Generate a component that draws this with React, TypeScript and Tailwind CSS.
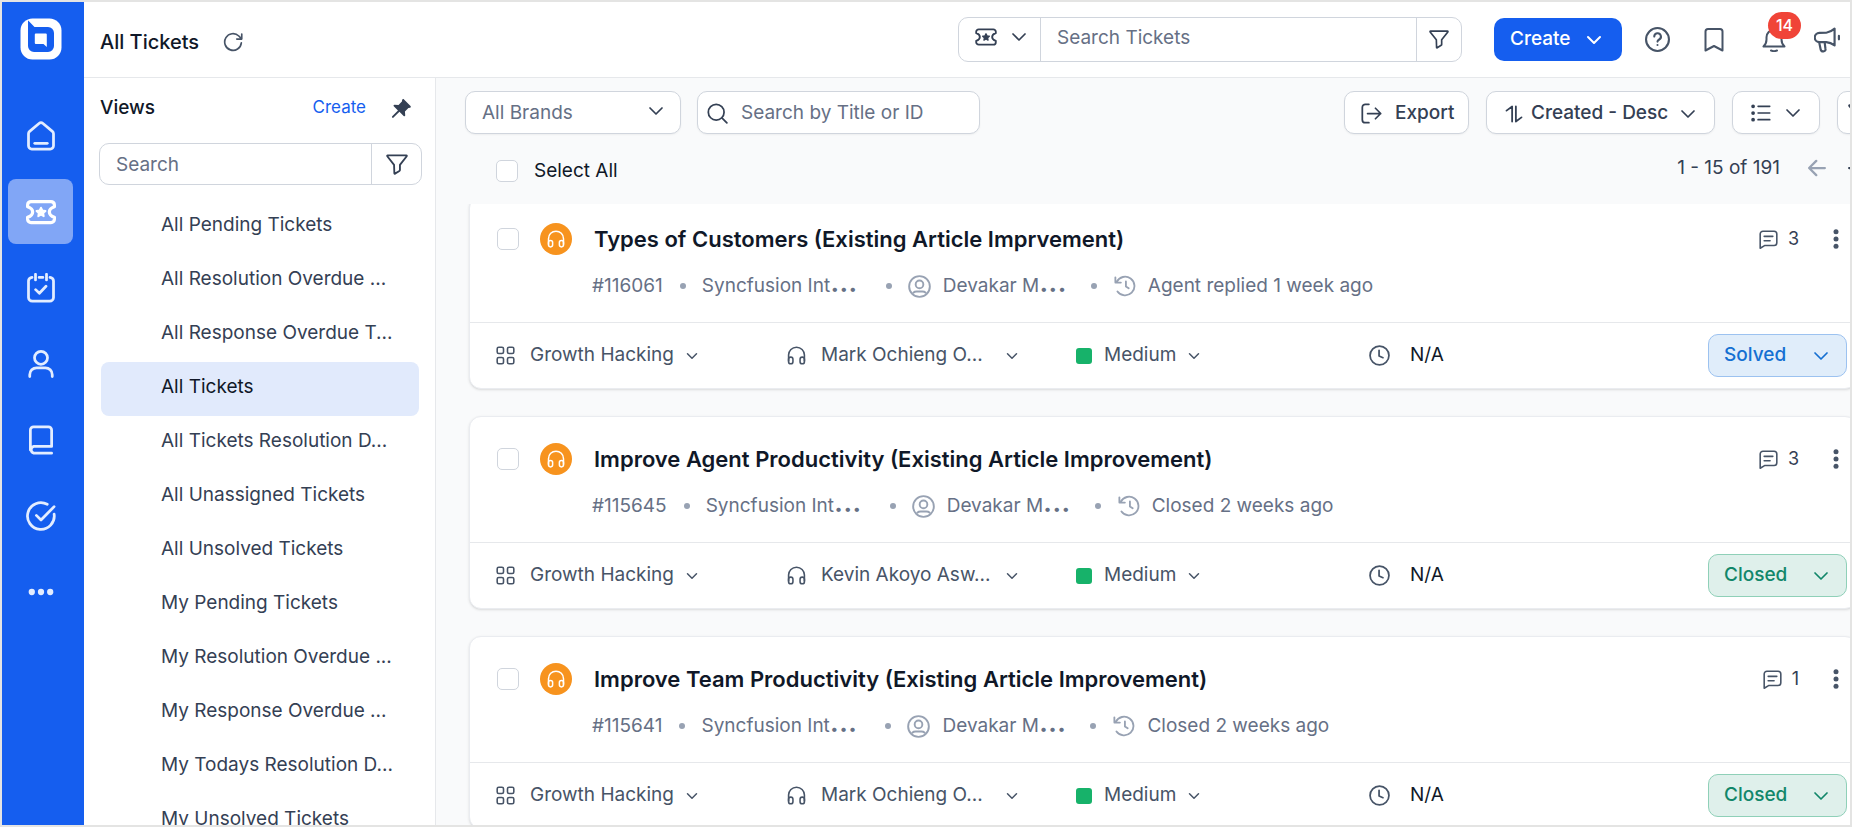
import type { ReactNode } from "react";
import { clsx } from "clsx";

interface IconProps {
  className?: string;
  strokeWidth?: number;
}

interface Ticket {
  id: string;
  title: string;
  agent: string;
  activity: string;
  comments: number;
  status: "Solved" | "Closed";
}

const VIEWS = [
  "All Pending Tickets",
  "All Resolution Overdue ...",
  "All Response Overdue T...",
  "All Tickets",
  "All Tickets Resolution D...",
  "All Unassigned Tickets",
  "All Unsolved Tickets",
  "My Pending Tickets",
  "My Resolution Overdue ...",
  "My Response Overdue ...",
  "My Todays Resolution D...",
  "My Unsolved Tickets",
];

const TICKETS: Ticket[] = [
  {
    id: "116061",
    title: "Types of Customers (Existing Article Imprvement)",
    agent: "Mark Ochieng O...",
    activity: "Agent replied 1 week ago",
    comments: 3,
    status: "Solved",
  },
  {
    id: "115645",
    title: "Improve Agent Productivity (Existing Article Improvement)",
    agent: "Kevin Akoyo Asw...",
    activity: "Closed 2 weeks ago",
    comments: 3,
    status: "Closed",
  },
  {
    id: "115641",
    title: "Improve Team Productivity (Existing Article Improvement)",
    agent: "Mark Ochieng O...",
    activity: "Closed 2 weeks ago",
    comments: 1,
    status: "Closed",
  },
];

/* ---------- Icons ---------- */

function Icon({ className, strokeWidth = 2, children }: IconProps & { children: ReactNode }) {
  return (
    <svg
      viewBox="0 0 24 24"
      fill="none"
      stroke="currentColor"
      strokeWidth={strokeWidth}
      strokeLinecap="round"
      strokeLinejoin="round"
      aria-hidden="true"
      className={clsx("shrink-0", className)}
    >
      {children}
    </svg>
  );
}

function Logo() {
  return (
    <svg viewBox="0 0 42 42" className="size-[42px]" aria-hidden="true">
      <rect x="0.5" y="0.5" width="41" height="41" rx="12" fill="#fff" />
      <path d="M8.200 2.500 14.500 9H28a6 6 0 0 1 6 6v13a6 6 0 0 1-6 6H14a6 6 0 0 1-6-6V3z" fill="#155eef" />
      <path d="M14.800 16.500a1 1 0 0 1 1-1h10a1 1 0 0 1 1 1V29L23.500 26h-7.700a1 1 0 0 1-1-1z" fill="#fff" />
    </svg>
  );
}

const HomeIcon = (p: IconProps) => (
  <Icon {...p}>
    <path d="M2 10.200c0-.8.300-1.400.9-1.900l7.500-6.300a2.500 2.500 0 0 1 3.200 0l7.500 6.300c.6.500.9 1.100.9 1.900v9.600a2.600 2.600 0 0 1-2.600 2.600H4.600A2.600 2.600 0 0 1 2 19.800z" />
    <path d="M7 17.800h10" />
  </Icon>
);

const TicketIcon = (p: IconProps) => (
  <Icon {...p}>
    <path d="M1.300 6.300a2.700 2.700 0 0 1 2.700-2.700h16a2.700 2.700 0 0 1 2.700 2.700v1.500c-2.500.8-4 2.200-4 4.200s1.500 3.400 4 4.200v1.500a2.700 2.700 0 0 1-2.700 2.700H4a2.700 2.700 0 0 1-2.700-2.700v-1.500c2.500-.8 4-2.200 4-4.200s-1.500-3.400-4-4.200z" />
    <path
      d="m12 8.500 1.100 2.300 2.500.4-1.800 1.700.4 2.500-2.200-1.200-2.200 1.200.4-2.500-1.800-1.700 2.500-.4z"
      fill="currentColor"
      strokeWidth="1.500"
    />
  </Icon>
);

const CalendarIcon = (p: IconProps) => (
  <Icon {...p}>
    <path d="M4.800 3.500a3 3 0 0 0-2.800 3v13a3 3 0 0 0 3 3h14a3 3 0 0 0 3-3v-13a3 3 0 0 0-2.800-3M10.500 3.500h3M7.600 1v4.500M16.400 1v4.500M7.700 13.300l3 2.900 5.300-5.600" />
  </Icon>
);

const UserIcon = (p: IconProps) => (
  <Icon {...p}>
    <circle cx="12" cy="7" r="5.200" />
    <path d="M3 22v-1.500a5.500 5.500 0 0 1 5.500-5.500h7a5.500 5.500 0 0 1 5.500 5.500V22" />
  </Icon>
);

const BookIcon = (p: IconProps) => (
  <Icon {...p}>
    <path d="M20.500 22.500H6.200a2.800 2.800 0 0 1 0-5.400h14.300V4a2.500 2.500 0 0 0-2.500-2.500H6A2.500 2.500 0 0 0 3.500 4v16" />
  </Icon>
);

const CheckCircleIcon = (p: IconProps) => (
  <Icon {...p}>
    <path d="M22.500 10.500a10.700 10.700 0 1 1-5.500-7.900" />
    <path d="m8.300 11.500 3.700 3.700L22.500 4.500" />
  </Icon>
);

const DotsIcon = ({ className }: IconProps) => (
  <svg viewBox="0 0 24 24" fill="currentColor" className={className} aria-hidden="true">
    <circle cx="3.500" cy="12" r="2.900" />
    <circle cx="12" cy="12" r="2.900" />
    <circle cx="20.500" cy="12" r="2.900" />
  </svg>
);

const KebabIcon = ({ className }: IconProps) => (
  <svg viewBox="0 0 6 20" fill="currentColor" className={className} aria-hidden="true">
    <circle cx="3" cy="2.800" r="2.500" />
    <circle cx="3" cy="10" r="2.500" />
    <circle cx="3" cy="17.200" r="2.500" />
  </svg>
);

const RefreshIcon = (p: IconProps) => (
  <Icon {...p}>
    <path d="M22 13a10 10 0 1 1-3-8.200L22 8M22.500 2.500V8.500h-6" />
  </Icon>
);

const PinIcon = ({ className }: IconProps) => (
  <svg viewBox="0 0 24 24" fill="currentColor" className={className} aria-hidden="true">
    <path d="M14.200 1.600 22.400 9.800c.6.600.3 1.600-.5 1.800l-1.800.3-3.800 3.800.3 4.300c0 .9-1 1.400-1.700.8l-4.600-4.600-6.400 6.200a1 1 0 0 1-1.500-1.400l6.300-6.400-4.600-4.500c-.6-.7-.1-1.700.8-1.700l4.400.2 3.700-3.700.3-1.800c.2-.8 1.200-1.100 1.800-.5z" />
  </svg>
);

const FunnelIcon = (p: IconProps) => (
  <Icon {...p}>
    <path d="M1.800 2.500h20.400c.5 0 .7.600.4 1L15.200 13v5.500c0 .5-.2.900-.6 1.100L9.800 22.500c-.3.200-.7 0-.7-.4L8.800 13 1.400 3.500c-.3-.4-.1-1 .4-1z" />
  </Icon>
);

const ChevronIcon = (p: IconProps) => (
  <Icon {...p}>
    <path d="m3 7.500 9 9 9-9" />
  </Icon>
);

const HelpIcon = (p: IconProps) => (
  <Icon {...p}>
    <circle cx="12" cy="12" r="11" />
    <path d="M8.900 9.200a3.200 3.200 0 1 1 4.700 2.800c-1 .6-1.600 1-1.600 2M12 17.200v.1" />
  </Icon>
);

const BookmarkIcon = (p: IconProps) => (
  <Icon {...p}>
    <path d="M3.500 3.500a2.500 2.500 0 0 1 2.500-2.500h12a2.500 2.500 0 0 1 2.500 2.500V22.500L12 18l-8.500 4.500z" />
  </Icon>
);

const BellIcon = (p: IconProps) => (
  <Icon {...p}>
    <path d="M1.500 18.500h21c-2-1.900-3-4.200-3-7V9.300a7.500 7.500 0 0 0-15 0v2.200c0 2.800-1 5.100-3 7zM9 22.500c1.900.8 4.100.8 6 0" />
  </Icon>
);

const MegaphoneIcon = (p: IconProps) => (
  <Icon {...p}>
    <path d="M11.300 5.300c3-.4 5.300-1.700 7.700-3.800v15.500c-2.400-1.800-4.700-2.800-7.700-3H5a4.300 4.300 0 0 1 0-8.600zM4.800 14.200l1.300 6.300c.2 1.200 1 2 2.300 2h.4c1.200 0 2-1 1.800-2.200L9.800 14M23 8.200v3.200" />
  </Icon>
);

const SearchIcon = (p: IconProps) => (
  <Icon {...p}>
    <circle cx="10.500" cy="10.500" r="9" />
    <path d="m17.300 17.300 5.400 5.400" />
  </Icon>
);

const ExportIcon = (p: IconProps) => (
  <Icon {...p}>
    <path d="M9 1.500H5A3.500 3.500 0 0 0 1.500 5v14A3.500 3.500 0 0 0 5 22.500h4M7.500 12h15M16.500 6l6 6-6 6" />
  </Icon>
);

const SortIcon = (p: IconProps) => (
  <Icon {...p}>
    <path d="M2 7.500 9.500 2v20M14.500 2v20l7.500-5.500" />
  </Icon>
);

const ListIcon = (p: IconProps) => (
  <Icon {...p}>
    <path d="M8.500 4h14M8.500 12h14M8.500 20h14" />
    <path d="M2.500 4v.01M2.500 12v.01M2.500 20v.01" strokeWidth="4.500" />
  </Icon>
);

const ArrowIcon = (p: IconProps) => (
  <Icon {...p}>
    <path d="M22.500 12H2M11 2.500 1.500 12l9.500 9.500" />
  </Icon>
);

const HeadsetIcon = (p: IconProps) => (
  <Icon {...p}>
    <path d="M2 19v-7.500a10 10 0 0 1 20 0V19" />
    <rect x="2" y="14" width="5.500" height="8.500" rx="2.700" />
    <rect x="16.500" y="14" width="5.500" height="8.500" rx="2.700" />
  </Icon>
);

const PersonCircleIcon = (p: IconProps) => (
  <Icon {...p}>
    <circle cx="12" cy="12" r="10.800" />
    <circle cx="12" cy="9.800" r="4" />
    <path d="M5.500 18.500c1-.9 2-1.200 3.500-1.200h6c1.500 0 2.500.3 3.500 1.200" />
  </Icon>
);

const HistoryIcon = (p: IconProps) => (
  <Icon {...p}>
    <path d="M3 7.500A10.200 10.200 0 1 1 3.800 18M1.500 2.500v5.800h6M13 7v5.500l3 2" />
  </Icon>
);

const GridIcon = (p: IconProps) => (
  <Icon {...p}>
    <rect x="1.500" y="1.500" width="8" height="8" rx="2" />
    <rect x="14.500" y="1.500" width="8" height="8" rx="2" />
    <rect x="1.500" y="14.500" width="8" height="8" rx="2" />
    <rect x="14.500" y="14.500" width="8" height="8" rx="2" />
  </Icon>
);

const ClockIcon = (p: IconProps) => (
  <Icon {...p}>
    <circle cx="12" cy="12" r="10.800" />
    <path d="M11.500 6v6.500l4.500 2" />
  </Icon>
);

const CommentIcon = (p: IconProps) => (
  <Icon {...p}>
    <path d="M1.500 23V5A3.500 3.500 0 0 1 5 1.500h14A3.500 3.500 0 0 1 22.500 5v11a3.500 3.500 0 0 1-3.500 3.500H7.500zM6.500 8h11M6.500 13.500h7.500" />
  </Icon>
);

/* ---------- Side rail ---------- */

const RAIL = [
  { label: "Home", icon: HomeIcon },
  { label: "Tickets", icon: TicketIcon, active: true },
  { label: "Activities", icon: CalendarIcon },
  { label: "Contacts", icon: UserIcon },
  { label: "Knowledge base", icon: BookIcon },
  { label: "Approvals", icon: CheckCircleIcon },
  { label: "More", icon: DotsIcon },
];

function Rail() {
  return (
    <nav aria-label="Main" className="flex w-[82px] shrink-0 flex-col bg-[#155eef] pt-4 pr-[11px] pl-1.5">
      <a href="#" aria-label="Dashboard" className="flex justify-center">
        <Logo />
      </a>
      <div className="mt-[43px] flex flex-col gap-[11px]">
        {RAIL.map(({ label, icon: RailIcon, active }) => (
          <a
            key={label}
            href="#"
            aria-label={label}
            className={clsx(
              "flex h-[65px] items-center justify-center rounded-lg",
              active ? "bg-[#81a6f6] text-white" : "text-[#e3edff]",
            )}
          >
            <RailIcon
              className={label === "More" ? "size-[26px]" : "size-[30px]"}
              strokeWidth={active ? 2.6 : 2.2}
            />
          </a>
        ))}
      </div>
    </nav>
  );
}

/* ---------- Header ---------- */

function Header() {
  return (
    <header className="flex h-[76px] shrink-0 items-center border-b border-[#e6e8eb] bg-white pr-2.5 pl-4">
      <div className="flex items-center pt-1">
        <h1 className="text-xl font-medium text-[#101828]">All Tickets</h1>
        <button type="button" aria-label="Refresh" className="ml-6 text-[#475467]">
          <RefreshIcon className="size-5" />
        </button>
      </div>

      <div className="ml-auto flex h-[45px] w-[504px] items-stretch rounded-[10px] border border-[#d0d5dd] text-[#344054]">
        <button type="button" aria-label="Search in tickets" className="flex w-[82px] items-center justify-center gap-3.5 border-r border-[#d0d5dd] pb-1.5 pl-0.5">
          <TicketIcon className="size-[22px]" />
          <ChevronIcon className="size-4" strokeWidth={2.6} />
        </button>
        <input
          aria-label="Search tickets"
          placeholder="Search Tickets"
          className="min-w-0 flex-1 px-4 pb-0.5 text-[19px] outline-none placeholder:text-[#667085]"
        />
        <button type="button" aria-label="Filter" className="flex w-[45px] items-center justify-center border-l border-[#d0d5dd] pb-0.5">
          <FunnelIcon className="size-5" />
        </button>
      </div>

      <button type="button" className="ml-8 flex h-[43px] w-32 items-center justify-between rounded-[10px] bg-[#155eef] pr-5 pl-4 text-[19px] font-medium text-white">
        Create
        <ChevronIcon className="size-4" strokeWidth={3} />
      </button>

      <div className="ml-[23px] flex items-center text-[#475467]">
        <button type="button" aria-label="Help">
          <HelpIcon className="size-[25px]" />
        </button>
        <button type="button" aria-label="Bookmarks" className="ml-8">
          <BookmarkIcon className="size-6" />
        </button>
        <button type="button" aria-label="14 notifications" className="relative ml-9">
          <BellIcon className="size-6" />
          <span className="absolute -top-4 left-1.5 flex h-[27px] w-[33px] items-center justify-center rounded-full bg-[#f04438] text-base font-medium text-white">
            14
          </span>
        </button>
        <button type="button" aria-label="Announcements" className="ml-7">
          <MegaphoneIcon className="size-[26px]" />
        </button>
      </div>
    </header>
  );
}

/* ---------- Views panel ---------- */

function ViewsPanel() {
  return (
    <aside className="flex w-[352px] shrink-0 flex-col overflow-hidden border-r border-[#e6e8eb] bg-white">
      <div className="flex h-[60px] shrink-0 items-center pr-[23px] pl-4">
        <h2 className="text-[19px] font-medium text-[#101828]">Views</h2>
        <button type="button" className="ml-auto text-[17px] text-[#155eef]">
          Create
        </button>
        <button type="button" aria-label="Pin panel" className="ml-6 text-[#344054]">
          <PinIcon className="size-[22px]" />
        </button>
      </div>

      <div className="mt-[5px] mr-[13px] ml-[15px] flex h-[42px] shrink-0 items-stretch rounded-[10px] border border-[#d0d5dd]">
        <input
          aria-label="Search views"
          placeholder="Search"
          className="min-w-0 flex-1 px-4 pt-0.5 text-[19px] outline-none placeholder:text-[#667085]"
        />
        <button type="button" aria-label="Filter views" className="flex w-[50px] items-center justify-center border-l border-[#d0d5dd] text-[#344054]">
          <FunnelIcon className="size-[22px]" />
        </button>
      </div>

      <ul className="mt-[15px] pr-4 pl-[17px]">
        {VIEWS.map((view) => (
          <li key={view}>
            <a
              href="#"
              className={clsx(
                "flex h-[54px] items-center rounded-lg pb-1 pl-[60px] text-[19px] whitespace-nowrap",
                view === "All Tickets" ? "bg-[#e1eafc] text-[#101828]" : "text-[#344054]",
              )}
            >
              {view}
            </a>
          </li>
        ))}
      </ul>
    </aside>
  );
}

/* ---------- Tickets ---------- */

const controlClass = "flex h-[43px] shrink-0 items-center rounded-[10px] border border-[#d0d5dd] bg-white text-[#344054] shadow-xs";

function Toolbar() {
  return (
    <div className="flex items-center pt-[13px] pl-[29px]">
      <div className="relative w-[216px] shrink-0">
        <select
          aria-label="Brand"
          className="h-[43px] w-full appearance-none rounded-[10px] border border-[#d0d5dd] bg-white px-4 pt-0.5 text-[19px] text-[#667085] shadow-xs"
        >
          <option>All Brands</option>
        </select>
        <ChevronIcon className="pointer-events-none absolute top-3 right-[17px] size-4 text-[#344054]" strokeWidth={2.6} />
      </div>
      <label className={clsx(controlClass, "ml-4 w-[283px] gap-[13px] pt-0.5 pl-[9px]")}>
        <SearchIcon className="size-[21px]" />
        <input
          aria-label="Search by title or ID"
          placeholder="Search by Title or ID"
          className="min-w-0 flex-1 text-[19px] outline-none placeholder:text-[#667085]"
        />
      </label>

      {/* The toolbar runs on past the right edge of the pane */}
      <div className="-mr-8 ml-auto flex gap-[17px] text-[19px] font-medium">
        <button type="button" className={clsx(controlClass, "w-[125px] gap-[13px] pt-0.5 pl-4")}>
          <ExportIcon className="size-[21px]" />
          Export
        </button>
        <button type="button" className={clsx(controlClass, "w-[229px] gap-2 pt-0.5 pl-[18px]")}>
          <SortIcon className="size-[18px]" strokeWidth={2.4} />
          Created - Desc
          <ChevronIcon className="ml-1 size-4" strokeWidth={2.6} />
        </button>
        <button type="button" aria-label="Layout" className={clsx(controlClass, "w-[88px] justify-center gap-3.5")}>
          <ListIcon className="size-5" />
          <ChevronIcon className="size-4" strokeWidth={2.6} />
        </button>
        <button type="button" aria-label="Filter tickets" className={clsx(controlClass, "w-[45px] pl-2.5")}>
          <FunnelIcon className="size-5" />
        </button>
      </div>
    </div>
  );
}

const checkboxClass =
  "h-[22px] w-[22px] shrink-0 appearance-none rounded-[5px] border border-[#d0d5dd] bg-white checked:bg-[#155eef]";

function Pager() {
  return (
    <div className="flex h-[70px] items-center pt-1 pl-[60px] text-[19px]">
      <label className="flex items-center gap-4 text-[#101828]">
        <input type="checkbox" className={checkboxClass} />
        Select All
      </label>
      <div className="-mr-4 ml-auto flex items-center pb-1.5 text-[#344054]">
        <span>1 - 15 of 191</span>
        <button type="button" aria-label="Previous page" className="ml-7 text-[#98a2b3]">
          <ArrowIcon className="size-[18px]" strokeWidth={3} />
        </button>
        <button type="button" aria-label="Next page" className="ml-[22px]">
          <ArrowIcon className="size-[18px] rotate-180" strokeWidth={3} />
        </button>
      </div>
    </div>
  );
}

const Bullet = () => <span className="size-1.5 shrink-0 rounded-full bg-[#98a2b3]" />;

const Clipped = ({ children }: { children: ReactNode }) => (
  <span>
    {children}
    <span className="text-[30px] leading-0 font-medium">...</span>
  </span>
);

const STATUS_STYLES = {
  Solved: "border-[#9cc2f0] bg-[#e0edfa] text-[#1570d2]",
  Closed: "border-[#8fd0b8] bg-[#dff0eb] text-[#12876a]",
};

function TicketCard({ ticket }: { ticket: Ticket }) {
  return (
    <article className="shrink-0 rounded-xl border border-[#eaecf0] bg-white shadow-sm">
      <div className="h-[125px] pt-[26px] pr-[17px] pl-[27px]">
        <div className="flex h-8 items-center">
          <input type="checkbox" aria-label={`Select ticket ${ticket.id}`} className={checkboxClass} />
          <span className="ml-[21px] flex size-8 shrink-0 items-center justify-center rounded-full bg-[#f7931e] text-white">
            <HeadsetIcon className="size-[18px]" />
          </span>
          <h3 className="ml-[22px] text-[22px] font-semibold whitespace-nowrap text-[#101828]">
            {ticket.title}
          </h3>
          <span className="ml-auto flex items-center gap-2.5 text-lg text-[#344054]">
            <CommentIcon className="size-[19px] text-[#475467]" />
            {ticket.comments}
          </span>
          <button type="button" aria-label="More actions" className="ml-[34px] text-[#475467]">
            <KebabIcon className="h-5 w-1.5" />
          </button>
        </div>
        <div className="mt-[15px] flex h-8 items-center pl-[95px] text-[19px] whitespace-nowrap text-[#667085]">
          <span>#{ticket.id}</span>
          <span className="ml-[17px] flex items-center gap-4">
            <Bullet />
            <span className="w-[184px]">
              <Clipped>Syncfusion Int</Clipped>
            </span>
          </span>
          <span className="flex items-center">
            <Bullet />
            <PersonCircleIcon className="ml-4 size-[23px] text-[#98a2b3]" />
            <span className="ml-3 w-[148px]">
              <Clipped>Devakar M</Clipped>
            </span>
          </span>
          <span className="flex items-center">
            <Bullet />
            <HistoryIcon className="ml-[17px] size-[22px] text-[#98a2b3]" />
            <span className="ml-3">{ticket.activity}</span>
          </span>
        </div>
      </div>

      <div className="flex h-[66px] items-center border-t border-[#e6e8eb] pr-[9px] pl-[26px] text-[19px] text-[#475467]">
        <button type="button" className="flex w-[291px] items-center">
          <GridIcon className="size-[19px]" />
          <span className="ml-[15px]">Growth Hacking</span>
          <ChevronIcon className="ml-3 size-3" strokeWidth={3} />
        </button>
        <button type="button" className="flex w-[289px] items-center">
          <HeadsetIcon className="size-[19px]" />
          <span className="ml-[15px] w-[185px] text-left">{ticket.agent}</span>
          <ChevronIcon className="size-3" strokeWidth={3} />
        </button>
        <button type="button" className="flex w-[293px] items-center">
          <span className="size-4 rounded-[3px] bg-[#17b26a]" />
          <span className="ml-3">Medium</span>
          <ChevronIcon className="ml-3 size-3" strokeWidth={3} />
        </button>
        <span className="flex items-center gap-5 text-[#101828]">
          <ClockIcon className="size-[21px] text-[#475467]" />
          N/A
        </span>
        <button
          type="button"
          className={clsx(
            "ml-auto flex h-[43px] w-[139px] items-center justify-between rounded-[10px] border pr-[17px] pl-[15px] font-medium",
            STATUS_STYLES[ticket.status],
          )}
        >
          {ticket.status}
          <ChevronIcon className="size-4" strokeWidth={2.6} />
        </button>
      </div>
    </article>
  );
}

export default function App() {
  return (
    <div className="flex h-screen overflow-hidden border-2 border-[#e4e4e3] bg-white font-['Inter',sans-serif]">
      <Rail />
      <div className="flex min-w-0 flex-1 flex-col">
        <Header />
        <div className="flex min-h-0 flex-1">
          <ViewsPanel />
          <main className="flex min-w-0 flex-1 flex-col overflow-hidden bg-[#f9fafb]">
            <Toolbar />
            <Pager />
            <div className="min-h-0 flex-1 overflow-hidden pl-[33px]">
              <div className="-mt-2 -mr-[7px] flex flex-col gap-[27px]">
                {TICKETS.map((ticket) => (
                  <TicketCard key={ticket.id} ticket={ticket} />
                ))}
              </div>
            </div>
          </main>
        </div>
      </div>
    </div>
  );
}
